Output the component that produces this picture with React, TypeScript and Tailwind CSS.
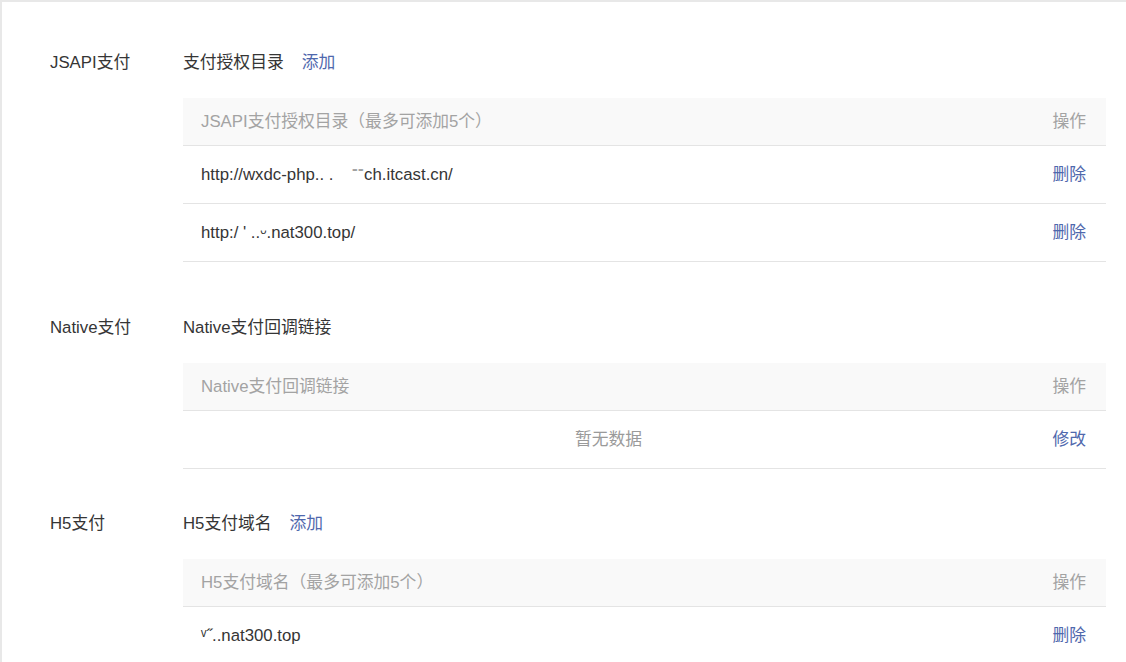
const LINK = "text-[#4f68ad]";

type Row = { text: string; action: string; empty?: boolean };

const Section = ({
  label,
  title,
  add,
  header,
  rows,
  className,
}: {
  label: string;
  title: string;
  add?: boolean;
  header: string;
  rows: Row[];
  className?: string;
}) => {
  return (
    <div className={`flex ${className ?? ""}`}>
      <div className="w-[133px] shrink-0 h-5 leading-[22px] text-[#353535]">{label}</div>
      <div className="flex-1">
        <div className="h-5 leading-[22px] flex gap-[18px] text-[#353535]">
          <span>{title}</span>
          {add && <span className={LINK}>添加</span>}
        </div>
        <div className="mt-[26px]">
          <div className="h-[48px] flex items-center bg-[#f9f9f9] border-b border-[#e4e4e4] text-[#a3a3a3]">
            <div className="flex-1 pl-[18px]">{header}</div>
            <div className="w-[72px] pr-5 text-right">操作</div>
          </div>
          {rows.map((r, i) => (
            <div key={i} className="h-[58px] flex items-center border-b border-[#e4e4e4]">
              {r.empty ? (
                <div className="flex-1 text-center text-[#9a9a9a]">{r.text}</div>
              ) : (
                <div className="flex-1 pl-[18px] whitespace-pre text-[#353535]">{r.text}</div>
              )}
              <div className={`w-[72px] pr-5 text-right ${LINK}`}>{r.action}</div>
            </div>
          ))}
        </div>
      </div>
    </div>
  );
};

const App = () => {
  return (
    <div
      className="w-[1126px] h-[662px] overflow-hidden bg-white border-t-2 border-l-2 border-[#e8e8e8] text-[16.8px] pl-[48px] pr-[20px] pt-[50px]"
      style={{ fontFamily: '"Liberation Sans", "Noto Sans CJK SC", sans-serif' }}
    >
      <Section
        label="JSAPI支付"
        title="支付授权目录"
        add
        header="JSAPI支付授权目录（最多可添加5个）"
        rows={[
          { text: "http://wxdc-php.. .    ⁻⁻ch.itcast.cn/", action: "删除" },
          { text: "http:/ ' ..ᵕ.nat300.top/", action: "删除" },
        ]}
      />
      <Section
        className="mt-[55px]"
        label="Native支付"
        title="Native支付回调链接"
        header="Native支付回调链接"
        rows={[{ text: "暂无数据", action: "修改", empty: true }]}
      />
      <Section
        className="mt-[44px]"
        label="H5支付"
        title="H5支付域名"
        add
        header="H5支付域名（最多可添加5个）"
        rows={[{ text: "ᵛ˝..nat300.top", action: "删除" }]}
      />
    </div>
  );
};

export default App;
